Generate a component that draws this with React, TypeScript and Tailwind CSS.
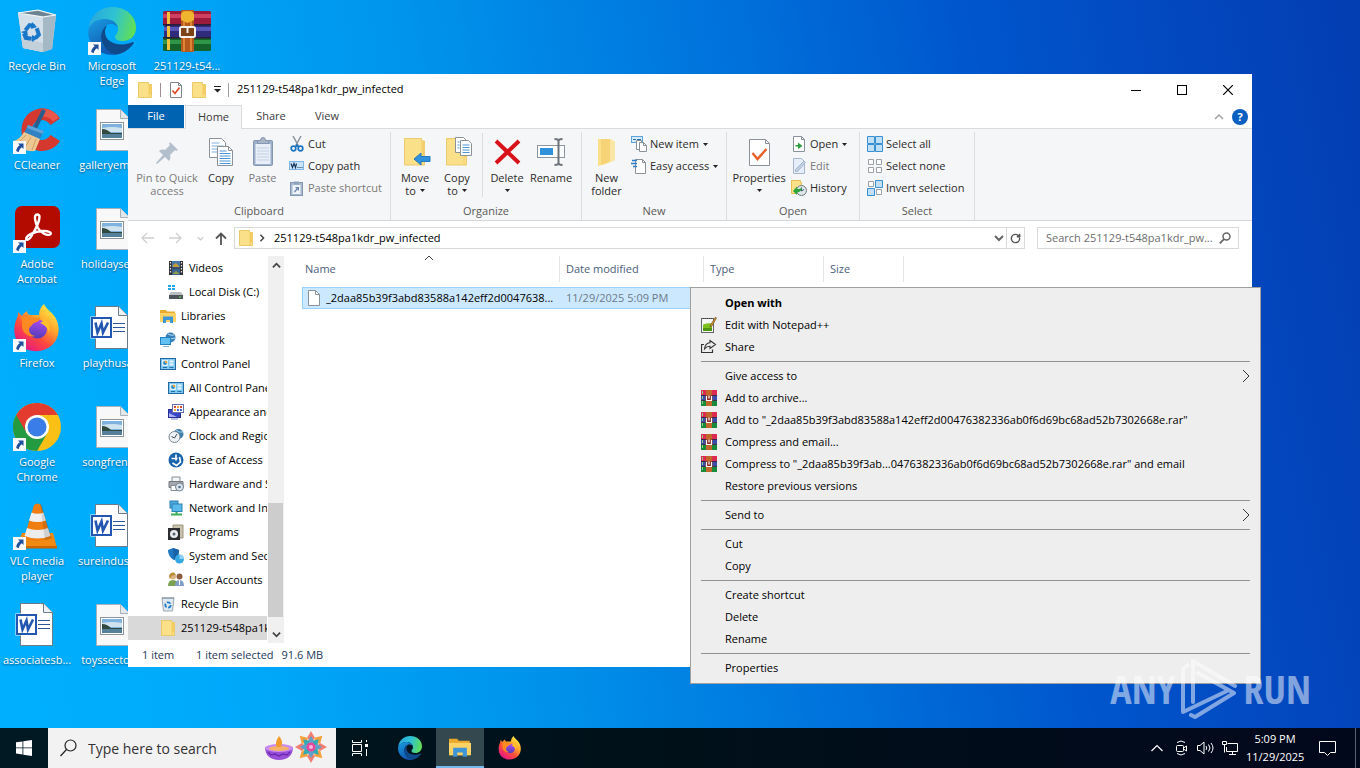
import type { ReactNode } from 'react';
import clsx from 'clsx';
import { RotateCw } from 'lucide-react';

const FOLDER_NAME = '251129-t548pa1kdr_pw_infected';

/* ---------- desktop icons ---------- */

const ShortcutArrow = () => (
    <svg
        className="absolute bottom-0 left-0"
        width="13"
        height="13"
        viewBox="0 0 13 13"
    >
        <rect width="13" height="13" fill="#f7f9fb" />
        <path
            d="M5 2.5h5.500V8L8.800 6.300C7 7.600 6 9 5.700 11.300L3.200 10C3.400 7.600 4.700 5.600 6.800 4.300z"
            fill="#1f4e9c"
        />
    </svg>
);

const RecycleBinIcon = ({ size = 48 }: { size?: number }) => (
    <svg width={size} height={size} viewBox="0 0 48 48">
        <path d="M5 6l20-3 18 5-4 34-9 3-20-4z" fill="#c9d8e2" />
        <path d="M30 10l13-2-4 34-9 3z" fill="#a5b8c6" />
        <path d="M5 6l25 4v35l-20-4z" fill="#d3e0e9" />
        <path d="M8 30l22 6v9l-20-4z" fill="#c3d0d9" />
        <path d="M5 6l20-3 18 5-13 2z" fill="#8fa4b1" />
        <path d="M8 6l17-2 14 4-9 1z" fill="#6b8391" />
        <path
            d="M5 6l20-3 18 5-13 2z"
            fill="none"
            stroke="#f3f8fa"
            strokeWidth="1.2"
        />
        <g
            fill="none"
            stroke="#1977c9"
            strokeWidth="4"
            transform="rotate(8 18 26)"
        >
            <path d="M12 24l3.500-5.500h5" />
            <path d="M23 20.500l3 6-3 4" />
            <path d="M19.500 31.500h-6l-2.500-4" />
        </g>
        <path d="M19 15l5 5-6 2zM25 31l-6 4v-7zM8 25l6-2 1 6z" fill="#1977c9" />
    </svg>
);

const EdgeIcon = ({ size = 48 }: { size?: number }) => (
    <svg width={size} height={size} viewBox="0 0 48 48">
        <defs>
            <linearGradient id="edgeTop" x1="0" y1="0.4" x2="1" y2="0.6">
                <stop offset="0" stopColor="#2aa8dc" />
                <stop offset="0.5" stopColor="#2fc3d2" />
                <stop offset="1" stopColor="#63e04f" />
            </linearGradient>
            <linearGradient id="edgeLeft" x1="0" y1="0" x2="0.5" y2="1">
                <stop offset="0" stopColor="#1b9de2" />
                <stop offset="1" stopColor="#0f57b0" />
            </linearGradient>
        </defs>
        <path
            d="M0.500 22C2 8 12 0 24.500 0 38 0 48 9 48 20.500 48 29 42 34 35 34c-6 0-8-2-8-4 0-2 3-3 3-8 0-6-6-10-13-10C9 12 3 16 .500 22z"
            fill="url(#edgeTop)"
        />
        <path
            d="M.500 22C3 15.500 9.500 12 16.500 12c7.500 0 13.500 4.300 13.500 10 0-2.500-3-5-7-5-6 0-10 5-10 12 0 9 7 17 16 18.500C14 50-2 39 .500 22z"
            fill="url(#edgeLeft)"
        />
        <path
            d="M17 19.500C13 24 12 30 14 35c3 8 9 12 15 12.500 7-1.200 13-5.500 16.500-11 .700-1.200-.500-1.800-1.500-1.200C34 40 17 37 17 25c0-2 .500-4 2-6.500z"
            fill="#114a8b"
        />
    </svg>
);

const WinrarIcon = ({ size = 48 }: { size?: number }) => (
    <svg width={size} height={size} viewBox="0 0 48 48">
        <rect x="0" y="4" width="48" height="14" rx="1.500" fill="#9c1a3b" />
        <rect x="0" y="7" width="48" height="4" fill="#cf3f60" />
        <rect x="1" y="18" width="47" height="13" rx="1.500" fill="#2f2c7c" />
        <rect x="1" y="20" width="47" height="4" fill="#5755b8" />
        <rect x="0" y="31" width="48" height="13" rx="1.500" fill="#14632a" />
        <rect x="0" y="33" width="48" height="4" fill="#2f9648" />
        <path d="M4 5h3v12H4zM4 19h3v11H4zM4 32h3v11H4z" fill="#f2c13b" />
        <path d="M0 17h48v1.500H0zM0 30h48v1.500H0z" fill="#2b1d33" />
        <rect x="18" y="3" width="13" height="42" rx="1" fill="#b55a1c" />
        <path d="M20 4h2v40h-2zM27 4h2v40h-2z" fill="#dd8636" />
        <path d="M18 8q0-4 6.500-4T31 8v5l-6.500 3L18 13z" fill="#f0b52e" />
        <rect
            x="17"
            y="20"
            width="15"
            height="10"
            rx="1.500"
            fill="#7b4316"
            stroke="#f1f1ee"
            strokeWidth="2"
        />
        <path d="M24.500 20v6" stroke="#f1f1ee" strokeWidth="2" />
    </svg>
);

const CCleanerIcon = () => (
    <svg width="48" height="48" viewBox="0 0 48 48">
        <path
            d="M47 12.500C42 5 34 1.500 27 2.500 16 4 8.500 13 8.500 24S17 45 29 45c7 0 14-3.500 18-10l-9.500-6C35.500 32.500 32 34 28.500 34 23 34 19 29.500 19 24s4-10 9.500-10c3.500 0 7 1.500 9 5z"
            fill="#d5382f"
        />
        <path d="M28 3.500c8-1 14 2.500 18 8l-6 4c-4-5-9-5-12-4.500z" fill="#e8584a" />
        <path d="M31 4l-9 18" stroke="#2a5d8c" strokeWidth="4" />
        <path d="M15 19l16 6-4 8-16-6z" fill="#3181c3" />
        <path d="M15 19l16 6-1 3-16-6z" fill="#5ea4da" />
        <path d="M11 26l16 7-5 12c-8 1-17-3-22-10 5-1 8-4 11-9z" fill="#edc892" />
        <path
            d="M13 29L5 37M18 31l-6 11M23 33l-4 11"
            stroke="#cf9f60"
            strokeWidth="1"
        />
    </svg>
);

const AcrobatIcon = () => (
    <svg width="48" height="48" viewBox="0 0 48 48">
        <rect x="2" y="1" width="45" height="42" rx="7" fill="#b30b00" />
        <path
            d="M24 9.500c-3.500 0-2 8 1 13.500 3 5 9 8 12 6.500 2.500-1.500-1-4-8-3.500-7 .500-14 3.500-15.500 6.500-1.500 3 2 3.500 5-1.500 4-6.500 8-15 8-19 0-1.500-1-2.500-2.500-2.500z"
            fill="none"
            stroke="#fff"
            strokeWidth="2.400"
        />
    </svg>
);

const FirefoxIcon = ({ size = 48 }: { size?: number }) => (
    <svg width={size} height={size} viewBox="0 0 48 48">
        <defs>
            <linearGradient id="foxBody" x1="0.850" y1="0.050" x2="0.200" y2="0.950">
                <stop offset="0" stopColor="#fff14a" />
                <stop offset="0.350" stopColor="#ffa52b" />
                <stop offset="0.650" stopColor="#ff4a3d" />
                <stop offset="1" stopColor="#e31587" />
            </linearGradient>
            <linearGradient id="foxGlobe" x1="0.500" y1="0" x2="0.300" y2="1">
                <stop offset="0" stopColor="#a94bf0" />
                <stop offset="1" stopColor="#4f3bb5" />
            </linearGradient>
        </defs>
        <path
            d="M31 0c2 5 8 8 11 13 5 8 5 19-1 26-8 10-25 11-34 2C0 34 0 22 4 14c1-2 1-4 1-6l4 4c1-2 3-4 5-5 0 3 2 4 4 4h8c0-5 2-8 5-11z"
            fill="url(#foxBody)"
        />
        <circle cx="24.500" cy="25" r="9.500" fill="url(#foxGlobe)" />
        <path
            d="M8 13c5-2 9-1 12 1h7c0 3-3 4-6 5-2 1-2 3-4 4-3 4 1 9 6 9-8 2-15-4-14-12 0-3 0-5-1-7z"
            fill="#ff8a22"
        />
        <path d="M30 14c5 2 8 9 6 15-1-5-4-8-9-10 3-1 4-3 3-5z" fill="#ffbf2c" />
    </svg>
);

const ChromeIcon = () => (
    <svg width="48" height="48" viewBox="0 0 48 48">
        <circle cx="24" cy="24" r="24" fill="#fbc016" />
        <path d="M3.200 12A24 24 0 0 1 44.800 12H24L12 30z" fill="#e33b2e" />
        <path d="M3.200 12A24 24 0 0 0 24 48l10.400-18L24 36 13.600 30z" fill="#249a41" />
        <circle cx="24" cy="24" r="12" fill="#fff" />
        <circle cx="24" cy="24" r="9.500" fill="#3a7de9" />
    </svg>
);

const VlcIcon = () => (
    <svg width="48" height="48" viewBox="0 0 48 48">
        <path d="M9 31h31l4 15H3z" fill="#f08a12" />
        <path d="M3 44h41v2.500H3z" fill="#cd6500" />
        <path d="M21 3q3.500-3 7 0l10 33q-13.500 6-27 0z" fill="#ef7d10" />
        <path d="M18.500 10.500q6 2.500 12 0l2.500 8q-8.500 3-17 0z" fill="#f0f0f0" />
        <path d="M14 26q10.500 4 21 0l2.500 8q-13 5-26 0z" fill="#ececec" />
        <path d="M27 1.500l2 1 10 34-7 2z" fill="#000" opacity="0.120" />
    </svg>
);

const WordDocIcon = () => (
    <svg width="48" height="48" viewBox="0 0 48 48">
        <path d="M7.500 2.500h23l9 9v33h-32z" fill="#fff" stroke="#6d7b88" />
        <path d="M30.500 2.500v9h9" fill="#eef1f4" stroke="#6d7b88" />
        <path
            d="M25 19.500h12M25 23.500h12M25 27.500h12"
            stroke="#2b579a"
            strokeWidth="1.200"
        />
        <rect x="2.500" y="12.500" width="21" height="22" fill="#fff" />
        <rect
            x="4"
            y="14"
            width="19"
            height="19"
            fill="#fff"
            stroke="#2256b0"
            strokeWidth="2"
        />
        <path
            d="M7.500 18.500l2 10 4-9 1.500 9 5-10"
            fill="none"
            stroke="#2256b0"
            strokeWidth="2.600"
        />
    </svg>
);

const ImageDocIcon = () => (
    <svg width="48" height="48" viewBox="0 0 48 48">
        <path d="M8.500 3.500h24l9 9v32h-33z" fill="#f8f8f8" stroke="#a9b1b8" />
        <path d="M32.500 3.500v9h9" fill="#e3e7ea" stroke="#a9b1b8" />
        <rect x="12.500" y="16.500" width="23" height="17" fill="#fff" stroke="#8b949c" />
        <rect x="14" y="18" width="20" height="14" fill="#7fb2df" />
        <path d="M14 22q10-2 20 0v4H14z" fill="#cfe3ef" />
        <path d="M14 23q5 0 9 4h11v2H14z" fill="#31493f" />
        <path d="M14 28h20v4H14z" fill="#54809b" />
    </svg>
);

type DesktopItem = { label: string; icon: ReactNode; shortcut?: boolean };

const desktopItems: DesktopItem[] = [
    { label: 'Recycle Bin', icon: <RecycleBinIcon /> },
    { label: 'CCleaner', icon: <CCleanerIcon />, shortcut: true },
    { label: 'Adobe Acrobat', icon: <AcrobatIcon />, shortcut: true },
    { label: 'Firefox', icon: <FirefoxIcon />, shortcut: true },
    { label: 'Google Chrome', icon: <ChromeIcon />, shortcut: true },
    { label: 'VLC media player', icon: <VlcIcon />, shortcut: true },
    { label: 'associatesb...', icon: <WordDocIcon /> },
    { label: 'Microsoft Edge', icon: <EdgeIcon />, shortcut: true },
    { label: 'galleryemp...', icon: <ImageDocIcon /> },
    { label: 'holidayser...', icon: <ImageDocIcon /> },
    { label: 'playthusa...', icon: <WordDocIcon /> },
    { label: 'songfrenc...', icon: <ImageDocIcon /> },
    { label: 'sureindustr...', icon: <WordDocIcon /> },
    { label: 'toyssector...', icon: <ImageDocIcon /> },
    { label: '251129-t54...', icon: <WinrarIcon /> },
];

/* ---------- shared small icons ---------- */

const Svg16 = ({ children }: { children: ReactNode }) => (
    <svg className="shrink-0" width="16" height="16" viewBox="0 0 16 16" fill="none">
        {children}
    </svg>
);

const Svg32 = ({ children }: { children: ReactNode }) => (
    <svg className="shrink-0" width="32" height="32" viewBox="0 0 32 32" fill="none">
        {children}
    </svg>
);

const FolderIcon = () => (
    <Svg16>
        <path d="M1.500 .500h10v2h3v13h-13z" fill="#fbe08a" stroke="#ecc968" />
        <path d="M11.500 2.500h3v9l-2 1.500v2.500h-1z" fill="#f3cd62" />
    </Svg16>
);

const CheckPageIcon = () => (
    <Svg16>
        <path d="M2.500 .500h8l3 3v12h-11z" fill="#fff" stroke="#7e8388" />
        <path d="M10.500 .500v3h3" stroke="#7e8388" />
        <path d="M4.500 8.500l2.500 3 4.500-6" stroke="#dd4a25" strokeWidth="1.700" />
    </Svg16>
);

const Caret = () => (
    <svg className="inline-block shrink-0" width="5" height="3" viewBox="0 0 5 3">
        <path d="M0 0h5L2.500 3z" fill="#222" />
    </svg>
);

const Chevron = ({
    dir,
    size = 10,
    color = '#444',
    width = 1.5,
}: {
    dir: 'up' | 'down' | 'right';
    size?: number;
    color?: string;
    width?: number;
}) => (
    <svg className="shrink-0" width={size} height={size} viewBox="0 0 10 10">
        <path
            d={
                dir === 'up'
                    ? 'M1 7l4-4 4 4'
                    : dir === 'down'
                      ? 'M1 3l4 4 4-4'
                      : 'M3 1l4 4-4 4'
            }
            fill="none"
            stroke={color}
            strokeWidth={width}
        />
    </svg>
);

/* ---------- ribbon ---------- */

const PinIcon = () => (
    <Svg32>
        <path
            d="M19 6l8 8-2 1-1-1-5 5c1 3 0 5-1 6l-4-4-8 7-1-1 7-8-4-4c1-1 3-2 6-1l5-5-1-1z"
            fill="#b4bfce"
        />
    </Svg32>
);

const CopyIcon = () => (
    <Svg32>
        <path d="M4.500 2.500h12l4 4v15h-16z" fill="#fff" stroke="#8b9199" />
        <path d="M6.500 7h8M6.500 10h12M6.500 13h12M6.500 16h12" stroke="#7fb0df" />
        <path d="M12.500 10.500h11l4 4v15h-15z" fill="#fff" stroke="#8b9199" />
        <path d="M23.500 10.500v4h4" stroke="#8b9199" />
        <path
            d="M14.500 15h7M14.500 17.500h11M14.500 20h11M14.500 22.500h11M14.500 25h11M14.500 27.500h11"
            stroke="#4c94d8"
        />
    </Svg32>
);

const PasteIcon = () => (
    <Svg32>
        <rect x="6.500" y="4.500" width="19" height="25" rx="1" fill="#9db0c9" stroke="#8497b2" />
        <rect x="8.500" y="8" width="15" height="20" fill="#e8eff8" />
        <path d="M10 12h12M10 15h12M10 18h12M10 21h12M10 24h12" stroke="#c2d0e2" />
        <path d="M10.500 7.500v-3h3q0-3 2.500-3t2.500 3h3v3z" fill="#a9b5c6" stroke="#8497b2" />
    </Svg32>
);

const ScissorsIcon = () => (
    <Svg16>
        <path d="M4 0l6 11M12 0L6 11" stroke="#8d959e" strokeWidth="1.500" />
        <circle cx="4.500" cy="12.500" r="2.300" stroke="#1c76c4" strokeWidth="1.700" />
        <circle cx="11.500" cy="12.500" r="2.300" stroke="#1c76c4" strokeWidth="1.700" />
        <path d="M8 7.500l2 3.500H6z" fill="#1c76c4" />
    </Svg16>
);

const CopyPathIcon = () => (
    <Svg16>
        <rect x="0.500" y="3.500" width="14" height="8" fill="#c9e3f9" stroke="#7eb6e8" />
        <path d="M2 5.500l1.500 4 1.500-4 1.500 4 1-4" stroke="#17365c" strokeWidth="1.200" />
        <path d="M8.500 9.500h1M10.500 9.500h1M12.500 9.500h1" stroke="#17365c" />
    </Svg16>
);

const PasteShortcutIcon = () => (
    <Svg16>
        <rect x="1.500" y="2.500" width="12" height="13" fill="#a8b9cf" stroke="#8296b3" />
        <rect x="3.500" y="5" width="8" height="9" fill="#eef3fa" />
        <path d="M5 1.500h5v3H5z" fill="#8fa2bd" />
        <path d="M6 7h4v4l-1.500-1.500L6 12.500 5 11.500l2.500-3z" fill="#6e87ac" />
    </Svg16>
);

const BigFolder = ({ children }: { children?: ReactNode }) => (
    <Svg32>
        <path d="M5.500 2.500h17v2.500h3v24h-20z" fill="#fbe08a" stroke="#eccb70" />
        <path d="M22.500 5h3v15l-2 2v7h-1z" fill="#f3cf6c" />
        {children}
    </Svg32>
);

const MoveToIcon = () => (
    <BigFolder>
        <path d="M15 23l7-6v3.500h9v5h-9V29z" fill="#2f92db" stroke="#2279bd" />
    </BigFolder>
);

const CopyToIcon = () => (
    <BigFolder>
        <path d="M14.500 1.500h8l3 3v12h-11z" fill="#fff" stroke="#8b9199" />
        <path d="M19.500 4.500h8l3 3v12h-11z" fill="#fff" stroke="#8b9199" />
        <path
            d="M16.500 6h2M16.500 9h2M16.500 12h2M21.500 9h7M21.500 11.500h7M21.500 14h7M21.500 16.500h7"
            stroke="#4c94d8"
        />
    </BigFolder>
);

const DeleteIcon = () => (
    <Svg32>
        <path d="M5 5l23 22M28 5L5 27" stroke="#d9121a" strokeWidth="4" />
    </Svg32>
);

const RenameIcon = () => (
    <Svg32>
        <rect x="2.500" y="9.500" width="27" height="12" fill="#fff" stroke="#8d959e" />
        <rect x="5" y="12" width="13" height="7" fill="#2f92db" />
        <path
            d="M19.500 3q4 0 4 2 0-2 4-2M23.500 4v24M19.500 29q4 0 4-2 0 2 4 2"
            stroke="#6b7279"
            strokeWidth="2"
        />
    </Svg32>
);

const NewFolderIcon = () => (
    <Svg32>
        <path d="M7 3h12l5 3v18l-9 4-8 2z" fill="#fbe08a" />
        <path d="M10 3h9v22l-9 4z" fill="#f7d377" />
        <path d="M19 3l5 3v18l-5 1z" fill="#fae6a4" />
    </Svg32>
);

const BigCheckPage = () => (
    <Svg32>
        <path d="M6.500 3.500h16l4 4v22h-20z" fill="#fff" stroke="#8b9199" />
        <path d="M22.500 3.500v4h4" stroke="#8b9199" />
        <path d="M9.500 17l5 6 9-10" stroke="#e9622a" strokeWidth="2.500" />
    </Svg32>
);

const NewItemIcon = () => (
    <Svg16>
        <rect x="0.500" y="0.500" width="11" height="6" fill="#d6ebfb" stroke="#5ba3dd" />
        <path d="M2 3.500h3M6 3.500h4" stroke="#2b6cad" />
        <path d="M5.500 4.500h5v9h-5z" fill="#fff" stroke="#8b9199" />
        <path d="M8.500 6.500h4l3 3v6h-7z" fill="#fff" stroke="#8b9199" />
        <path d="M12.500 6.500v3h3" stroke="#8b9199" />
    </Svg16>
);

const EasyAccessIcon = () => (
    <Svg16>
        <path d="M4.500 1.500h7l3 3v11h-10z" fill="#fff" stroke="#8b9199" />
        <path d="M11.500 1.500v3h3" stroke="#8b9199" />
        <path d="M1 2.500h5M0 5.500h6M2 8.500h4" stroke="#2f7fc4" strokeWidth="1.500" />
    </Svg16>
);

const OpenIcon = () => (
    <Svg16>
        <path d="M2.500 .500h8l3 3v12h-11z" fill="#fff" stroke="#8b9199" />
        <path d="M10.500 .500v3h3" stroke="#8b9199" />
        <path d="M4.500 9H7V6.500L11.500 10 7 13v-2.500H4.500z" fill="#2d9c3c" />
    </Svg16>
);

const EditIcon = () => (
    <Svg16>
        <path d="M2.500 .500h8l3 3v12h-11z" fill="#e6eff9" stroke="#a5b6cc" />
        <path d="M13 3l1.500 1.500-8 9H4.500v-2z" fill="#c2d0e4" stroke="#a5b6cc" />
    </Svg16>
);

const HistoryIcon = () => (
    <Svg16>
        <path d="M.500 .500h9v2h1v11h-10z" fill="#fbe08a" stroke="#e3c04f" />
        <circle cx="10.500" cy="10.500" r="5" fill="#dfe6ea" stroke="#6d7982" />
        <path d="M10.500 7.500v3.500l2.500-1.500" stroke="#3a5a80" />
        <path d="M2 11l4-4.500V9c2 0 4-.500 5-1.500-.200 3-2 4.700-5 5V15z" fill="#2da33b" />
    </Svg16>
);

const SelectAllIcon = () => (
    <Svg16>
        <path
            d="M.500 .500h7v7h-7zM8.500 .500h7v7h-7zM.500 8.500h7v7h-7zM8.500 8.500h7v7h-7z"
            fill="#bfe0f8"
            stroke="#3a8fd0"
        />
    </Svg16>
);

const SelectNoneIcon = () => (
    <Svg16>
        <path
            d="M1.500 1.500h5v5h-5zM9.500 1.500h5v5h-5zM1.500 9.500h5v5h-5zM9.500 9.500h5v5h-5z"
            fill="#fff"
            stroke="#9ba1a7"
        />
    </Svg16>
);

const InvertIcon = () => (
    <Svg16>
        <path d="M1.500 1.500h5v5h-5zM9.500 9.500h5v5h-5z" fill="#fff" stroke="#9ba1a7" />
        <path d="M8.500 .500h7v7h-7zM.500 8.500h7v7h-7z" fill="#bfe0f8" stroke="#3a8fd0" />
    </Svg16>
);

const BigButton = ({
    icon,
    lines,
    caret,
    muted,
    width,
}: {
    icon: ReactNode;
    lines: string[];
    caret?: 'inline' | 'below';
    muted?: boolean;
    width: string;
}) => (
    <button
        className={clsx(
            'flex flex-col items-center gap-[3px] self-start pt-[3px] leading-[13px] whitespace-nowrap',
            width,
            muted && 'text-[#7a7a7a]'
        )}
    >
        {icon}
        <span>
            {lines.map((line, index) => (
                <span key={line} className="flex items-center justify-center gap-1">
                    {line}
                    {caret === 'inline' && index === lines.length - 1 && <Caret />}
                </span>
            ))}
            {caret === 'below' && (
                <span className="flex h-[13px] items-center justify-center">
                    <Caret />
                </span>
            )}
        </span>
    </button>
);

const SmallButton = ({
    icon,
    label,
    caret,
    muted,
}: {
    icon: ReactNode;
    label: string;
    caret?: boolean;
    muted?: boolean;
}) => (
    <button
        className={clsx(
            'flex h-[22px] items-center gap-[3px] whitespace-nowrap',
            muted && 'text-[#7a7a7a]'
        )}
    >
        {icon}
        <span className="pr-px">{label}</span>
        {caret && <Caret />}
    </button>
);

const RibbonGroup = ({
    title,
    width,
    children,
}: {
    title: string;
    width: string;
    children: ReactNode;
}) => (
    <section
        className={clsx('mt-[3px] shrink-0 border-r border-[#dcdee0] pt-px', width)}
    >
        <div className="flex h-[70px]">{children}</div>
        <h2 className="text-center leading-4 text-[#5a5a5a]">{title}</h2>
    </section>
);

const Ribbon = () => (
    <div className="flex h-[92px] shrink-0 border-b border-[#d5d7d9] bg-[#f5f6f7] text-[#2b2b2b]">
        <RibbonGroup title="Clipboard" width="w-[263px]">
            <BigButton
                icon={<PinIcon />}
                lines={['Pin to Quick', 'access']}
                width="w-[78px]"
                muted
            />
            <BigButton icon={<CopyIcon />} lines={['Copy']} width="w-[30px]" />
            <BigButton icon={<PasteIcon />} lines={['Paste']} width="w-[53px]" muted />
            <div>
                <SmallButton icon={<ScissorsIcon />} label="Cut" />
                <SmallButton icon={<CopyPathIcon />} label="Copy path" />
                <SmallButton icon={<PasteShortcutIcon />} label="Paste shortcut" muted />
            </div>
        </RibbonGroup>
        <RibbonGroup title="Organize" width="w-[191px]">
            <div className="flex pl-[3px]">
                <BigButton
                    icon={<MoveToIcon />}
                    lines={['Move', 'to']}
                    caret="inline"
                    width="w-[42px]"
                />
                <BigButton
                    icon={<CopyToIcon />}
                    lines={['Copy', 'to']}
                    caret="inline"
                    width="w-[42px]"
                />
                <div className="mx-1 h-16 w-px bg-[#dcdee0]" />
                <BigButton
                    icon={<DeleteIcon />}
                    lines={['Delete']}
                    caret="below"
                    width="w-[40px]"
                />
                <BigButton icon={<RenameIcon />} lines={['Rename']} width="w-[48px]" />
            </div>
        </RibbonGroup>
        <RibbonGroup title="New" width="w-[145px]">
            <BigButton
                icon={<NewFolderIcon />}
                lines={['New', 'folder']}
                width="w-[49px]"
            />
            <div>
                <SmallButton icon={<NewItemIcon />} label="New item" caret />
                <SmallButton icon={<EasyAccessIcon />} label="Easy access" caret />
            </div>
        </RibbonGroup>
        <RibbonGroup title="Open" width="w-[133px]">
            <BigButton
                icon={<BigCheckPage />}
                lines={['Properties']}
                caret="below"
                width="w-[64px]"
            />
            <div>
                <SmallButton icon={<OpenIcon />} label="Open" caret />
                <SmallButton icon={<EditIcon />} label="Edit" muted />
                <SmallButton icon={<HistoryIcon />} label="History" />
            </div>
        </RibbonGroup>
        <RibbonGroup title="Select" width="w-[115px]">
            <div className="pl-[7px]">
                <SmallButton icon={<SelectAllIcon />} label="Select all" />
                <SmallButton icon={<SelectNoneIcon />} label="Select none" />
                <SmallButton icon={<InvertIcon />} label="Invert selection" />
            </div>
        </RibbonGroup>
    </div>
);

/* ---------- navigation tree ---------- */

const VideosIcon = () => (
    <Svg16>
        <rect x="1" y="1" width="14" height="14" fill="#2f3136" />
        <rect x="4" y="1" width="8" height="6.500" fill="#4779a8" />
        <rect x="4" y="8.500" width="8" height="6.500" fill="#3a628c" />
        <path d="M5 5l3-2 3 3v1H5z" fill="#c59a3c" />
        <path d="M5 13l3-2 3 2v1H5z" fill="#8b9c4b" />
        <path
            d="M2.500 2v12M13.500 2v12"
            stroke="#e8e8e8"
            strokeWidth="1.200"
            strokeDasharray="1.500 1.500"
        />
    </Svg16>
);

const DiskIcon = () => (
    <Svg16>
        <path d="M0 1h3v2H0zM4 1h3v2H4zM0 4h3v2H0zM4 4h3v2H4z" fill="#22a7e6" />
        <path d="M3 8h10l2 3H1z" fill="#b9bec3" />
        <rect x="1" y="11" width="14" height="4" fill="#4c5359" />
        <rect x="11" y="12.500" width="2" height="1" fill="#6fe06a" />
    </Svg16>
);

const LibrariesIcon = ({ size = 16 }: { size?: number }) => (
    <svg className="shrink-0" width={size} height={size} viewBox="0 0 16 16">
        <path d="M0 2h6l1 1.500h8V14H0z" fill="#e9a92c" />
        <path d="M0 5h16v9H0z" fill="#fbd266" />
        <path d="M3 8.500h10V15h-3v-3H6v3H3z" fill="#3e95d6" />
    </svg>
);

const NetworkIcon = () => (
    <Svg16>
        <circle cx="10.500" cy="5.500" r="5" fill="#3a7fb5" />
        <path d="M8 2q3 2 6 1M6 6q4 2 9 0" stroke="#b4dcf2" />
        <rect x="0.500" y="5.500" width="10" height="7" fill="#5fc0f2" stroke="#2583bd" />
        <path d="M3 14.500h6" stroke="#7fb8d8" />
    </Svg16>
);

const ControlPanelIcon = () => (
    <Svg16>
        <rect x="0.500" y="2.500" width="15" height="11" fill="#7cc8f2" stroke="#23699e" />
        <rect x="2" y="4" width="6" height="6" fill="#d9f0fb" />
        <circle cx="5" cy="7" r="2" fill="#3d8fc6" />
        <path d="M5 7V4.500A2.500 2.500 0 0 1 7.500 7z" fill="#e7a13a" />
        <path d="M9.500 5.500h4M9.500 8.500h4" stroke="#e9f6fd" strokeWidth="2" />
        <path d="M3 11.500h4M9.500 11.500h4" stroke="#1f6dab" />
    </Svg16>
);

const AppearanceIcon = () => (
    <Svg16>
        <rect x="0.500" y="5.500" width="12" height="8" fill="#3945c4" stroke="#252f93" />
        <path d="M1 9l8 4H1z" fill="#a9aef5" />
        <rect x="4.500" y="0.500" width="11" height="8" fill="#fff" stroke="#6a6fae" />
        <path d="M6 2h2v2H6zM12 2h2v2h-2z" fill="#df4a3a" />
        <path d="M9 2h2v2H9zM6 5h2v2H6z" fill="#eaaa35" />
        <path d="M9 5h2v2H9zM12 5h2v2h-2z" fill="#4267c9" />
        <path d="M3 15h7" stroke="#7a82c9" />
    </Svg16>
);

const ClockIcon = () => (
    <Svg16>
        <circle cx="10.500" cy="6" r="5" fill="#3f7ea9" />
        <path d="M8 2q3 3 7 2" stroke="#9fd0e6" />
        <circle cx="6.500" cy="9" r="5.500" fill="#eef2f4" stroke="#7b8790" />
        <path d="M3.500 8.500l3 1.500L9 6" stroke="#3c4d5a" />
    </Svg16>
);

const EaseIcon = () => (
    <Svg16>
        <circle cx="8" cy="8" r="7.500" fill="#1964ad" />
        <path d="M8 2.500v6M3.500 6.500h6M11.500 5l1 5-4 3.500-4-2.500" stroke="#fff" strokeWidth="1.600" />
    </Svg16>
);

const PrinterIcon = () => (
    <Svg16>
        <path d="M4 1h8v5H4z" fill="#f3f4f5" stroke="#868c91" />
        <path d="M1 5.500h14v6H1z" fill="#a3a9ae" stroke="#72787d" />
        <path d="M3 9.500h6v5H3z" fill="#fff" stroke="#868c91" />
        <circle cx="11.500" cy="11" r="4" fill="#dfe4e8" stroke="#6d8294" />
        <circle cx="11.500" cy="11" r="1.300" fill="#4e7592" />
    </Svg16>
);

const InternetIcon = () => (
    <Svg16>
        <rect x="2" y="1" width="8" height="7" fill="#4da9de" stroke="#2b82b5" />
        <rect x="4" y="4" width="10" height="7.500" fill="#59b9ea" stroke="#2b82b5" />
        <path d="M3 14.500h11M8.500 12v3" stroke="#3fae5a" strokeWidth="2" />
    </Svg16>
);

const ProgramsIcon = () => (
    <Svg16>
        <path d="M5 1h10v13H5z" fill="#c9c2ad" stroke="#9d957d" />
        <rect x="0" y="4" width="12" height="12" fill="#2b2d31" />
        <circle cx="6" cy="10" r="4" fill="#e9ebee" />
        <circle cx="6" cy="10" r="1.500" fill="#55606c" />
    </Svg16>
);

const ShieldIcon = () => (
    <Svg16>
        <path d="M0 2l5-2 6 2c0 5-2 8-5 10C2 10 0 6 0 2z" fill="#1f78c1" />
        <path d="M5 0l6 2c0 5-2 8-5 10z" fill="#1763a6" />
        <circle cx="11.500" cy="11" r="4.500" fill="#35a7e5" />
        <path d="M11.500 11V6.500A4.500 4.500 0 0 1 16 11z" fill="#8fd0f3" />
    </Svg16>
);

const UsersIcon = () => (
    <Svg16>
        <circle cx="5" cy="4.500" r="3" fill="#d9b483" />
        <path d="M1 4q1-4 5-3.500L8 3 4 3.500 2 7z" fill="#b98a35" />
        <path d="M0 14q0-6 5-6t5 6z" fill="#7ca053" />
        <circle cx="11.500" cy="4.500" r="3" fill="#8a5d40" />
        <path d="M7 14q0-6 4.500-6t4.500 6z" fill="#7f9fc9" />
        <path d="M11.500 8v5" stroke="#fff" />
    </Svg16>
);

const SmallBinIcon = () => (
    <Svg16>
        <path d="M2 2h12l-1.500 13h-9z" fill="#dfe8ee" stroke="#9aa9b4" />
        <path d="M2 2h12" stroke="#7d8e9a" />
        <circle cx="8" cy="9" r="2.700" stroke="#1977c9" strokeWidth="1.700" strokeDasharray="4 1.600" />
    </Svg16>
);

type NavItem = { label: string; icon: ReactNode; deep?: boolean; selected?: boolean };

const navItems: NavItem[] = [
    { label: 'Videos', icon: <VideosIcon />, deep: true },
    { label: 'Local Disk (C:)', icon: <DiskIcon />, deep: true },
    { label: 'Libraries', icon: <LibrariesIcon /> },
    { label: 'Network', icon: <NetworkIcon /> },
    { label: 'Control Panel', icon: <ControlPanelIcon /> },
    { label: 'All Control Panel Items', icon: <ControlPanelIcon />, deep: true },
    { label: 'Appearance and Personalization', icon: <AppearanceIcon />, deep: true },
    { label: 'Clock and Region', icon: <ClockIcon />, deep: true },
    { label: 'Ease of Access', icon: <EaseIcon />, deep: true },
    { label: 'Hardware and Sound', icon: <PrinterIcon />, deep: true },
    { label: 'Network and Internet', icon: <InternetIcon />, deep: true },
    { label: 'Programs', icon: <ProgramsIcon />, deep: true },
    { label: 'System and Security', icon: <ShieldIcon />, deep: true },
    { label: 'User Accounts', icon: <UsersIcon />, deep: true },
    { label: 'Recycle Bin', icon: <SmallBinIcon /> },
    { label: FOLDER_NAME, icon: <FolderIcon />, selected: true },
];

const NavPane = () => (
    <nav className="flex w-[156px] shrink-0">
        <ul className="w-[139px]">
            {navItems.map((item) => (
                <li key={item.label}>
                    <a
                        href="#"
                        className={clsx(
                            'flex h-6 items-center gap-[5px] overflow-hidden whitespace-nowrap',
                            item.deep ? 'pl-10' : 'pl-8',
                            item.selected && 'bg-[#d9d9d9]'
                        )}
                    >
                        {item.icon}
                        {item.label}
                    </a>
                </li>
            ))}
        </ul>
        <div className="ml-px flex w-4 flex-col bg-[#f0f0f0]">
            <button className="flex h-[18px] items-center justify-center" aria-label="Scroll up">
                <Chevron dir="up" size={9} width={2} />
            </button>
            <div className="flex-1" />
            <div className="h-[114px] w-[15px] bg-[#cdcdcd]" />
            <button className="flex h-[26px] items-center justify-center pt-2" aria-label="Scroll down">
                <Chevron dir="down" size={9} width={2} />
            </button>
        </div>
    </nav>
);

/* ---------- file list ---------- */

const PageIcon = () => (
    <svg className="shrink-0" width="16" height="16" viewBox="0 0 16 16" fill="none">
        <path d="M2.500 .500h7l4 4v11h-11z" fill="#fff" stroke="#8b9199" />
        <path d="M9.500 .500v4h4" stroke="#8b9199" />
    </svg>
);

const headings = ['Name', 'Date modified', 'Type', 'Size'];

const FileList = () => (
    <main className="min-w-0 flex-1 pl-[18px]">
        <table className="w-[602px] table-fixed border-separate border-spacing-0">
            <colgroup>
                <col className="w-[258px]" />
                <col className="w-[144px]" />
                <col className="w-[120px]" />
                <col className="w-[80px]" />
            </colgroup>
            <thead>
                <tr>
                    {headings.map((heading) => (
                        <th
                            key={heading}
                            className="relative h-[31px] p-0 text-left align-top font-normal text-[#4c607a]"
                        >
                            <div
                                className={clsx(
                                    'h-[26px] border-r border-[#e5e5e5] pt-1 leading-[18px]',
                                    heading === 'Name' ? 'pl-[3px]' : 'pl-[6px]'
                                )}
                            >
                                {heading}
                            </div>
                            {heading === 'Name' && (
                                <span className="absolute inset-x-0 -top-[3px] flex justify-center pr-1">
                                    <Chevron dir="up" width={1} />
                                </span>
                            )}
                        </th>
                    ))}
                </tr>
            </thead>
            <tbody>
                <tr className="bg-[#cce8ff]">
                    <td className="h-[22px] border-y border-l border-[#99d1ff] p-0">
                        <div className="flex items-center gap-1 pl-[3px]">
                            <PageIcon />
                            <span className="truncate">
                                _2daa85b39f3abd83588a142eff2d0047638...
                            </span>
                        </div>
                    </td>
                    <td className="border-y border-[#99d1ff] p-0 pl-[6px] text-[#6d7a88]">
                        11/29/2025 5:09 PM
                    </td>
                    <td className="border-y border-[#99d1ff] p-0" />
                    <td className="border-y border-r border-[#99d1ff] p-0" />
                </tr>
            </tbody>
        </table>
    </main>
);

/* ---------- explorer window ---------- */

const TitleBar = () => (
    <header className="flex h-[31px] shrink-0 items-center">
        <div className="flex items-center gap-[7px] pl-[9px]">
            <FolderIcon />
            <span className="h-[14px] w-px bg-[#a08f8f]" />
            <button aria-label="Properties">
                <CheckPageIcon />
            </button>
            <button aria-label="New folder">
                <FolderIcon />
            </button>
            <button aria-label="Customize Quick Access Toolbar">
                <svg width="7" height="7" viewBox="0 0 7 7">
                    <path d="M0 0h7v1H0zM0 3h7L3.500 6.500z" fill="#222" />
                </svg>
            </button>
            <span className="h-[14px] w-px bg-[#a0a0a0]" />
        </div>
        <h1 className="flex-1 pl-2">{FOLDER_NAME}</h1>
        <div className="flex h-full pr-px">
            <button className="flex w-[46px] items-center justify-center" aria-label="Minimize">
                <svg width="10" height="10" viewBox="0 0 10 10">
                    <path d="M0 5.500h10" stroke="#000" />
                </svg>
            </button>
            <button className="flex w-[46px] items-center justify-center" aria-label="Maximize">
                <svg width="10" height="10" viewBox="0 0 10 10">
                    <rect x="0.500" y="0.500" width="9" height="9" fill="none" stroke="#000" />
                </svg>
            </button>
            <button className="flex w-[46px] items-center justify-center" aria-label="Close">
                <svg width="10" height="10" viewBox="0 0 10 10">
                    <path d="M0 0l10 10M10 0L0 10" stroke="#000" strokeWidth="1.200" />
                </svg>
            </button>
        </div>
    </header>
);

const Tabs = () => (
    <div className="flex h-6 shrink-0 items-stretch border-b border-[#dadbdc] text-[#3b3b3b]">
        <button className="w-14 bg-[#0063b1] text-white">File</button>
        <button className="-mb-px ml-px w-[57px] border-x border-t border-[#dadbdc] bg-[#f5f6f7]">
            Home
        </button>
        <button className="w-[58px]">Share</button>
        <button className="w-[54px]">View</button>
        <div className="ml-auto flex items-center gap-2 pr-1">
            <button aria-label="Minimize the Ribbon">
                <Chevron dir="up" color="#a0a0a0" />
            </button>
            <button
                className="h-4 w-4 rounded-full bg-[#0a5fc0] text-center text-[11px] leading-4 font-bold text-white"
                aria-label="Help"
            >
                ?
            </button>
        </div>
    </div>
);

const AddressBar = () => (
    <div className="flex h-[34px] shrink-0 items-center pr-[13px]">
        <div className="flex w-[106px] items-center justify-between pr-[7px] pl-[13px]">
            <button aria-label="Back">
                <svg width="13" height="12" viewBox="0 0 13 12" fill="none">
                    <path d="M1 6h12M6 1L1 6l5 5" stroke="#cfcfcf" strokeWidth="1.300" />
                </svg>
            </button>
            <button className="ml-2" aria-label="Forward">
                <svg width="13" height="12" viewBox="0 0 13 12" fill="none">
                    <path d="M12 6H0M7 1l5 5-5 5" stroke="#cfcfcf" strokeWidth="1.300" />
                </svg>
            </button>
            <button className="ml-2" aria-label="Recent locations">
                <Chevron dir="down" size={7} color="#c5c5c5" />
            </button>
            <button className="ml-1" aria-label="Up">
                <svg width="12" height="13" viewBox="0 0 12 13" fill="none">
                    <path d="M6 13V1.500M1 6.500l5-5 5 5" stroke="#555" strokeWidth="1.800" />
                </svg>
            </button>
        </div>
        <div className="flex h-[22px] min-w-0 flex-1 items-center border border-[#d9d9d9]">
            <span className="pr-1 pl-[3px]">
                <FolderIcon />
            </span>
            <Chevron dir="right" size={8} width={1.8} />
            <a href="#" className="flex-1 pl-2">
                {FOLDER_NAME}
            </a>
            <button className="px-[2px]" aria-label="Previous locations">
                <Chevron dir="down" color="#666" width={2} />
            </button>
            <button
                className="flex h-full w-[18px] items-center justify-center border-l border-[#d9d9d9]"
                aria-label="Refresh"
            >
                <RotateCw size={11} color="#555" strokeWidth={3.2} />
            </button>
        </div>
        <div className="ml-3 flex h-[22px] w-[202px] items-center border border-[#d9d9d9] pr-[7px] pl-2">
            <input
                type="text"
                aria-label="Search folder"
                className="min-w-0 flex-1 outline-none placeholder:text-[#6d6d6d]"
                placeholder="Search 251129-t548pa1kdr_pw..."
            />
            <svg width="12" height="12" viewBox="0 0 12 12" fill="none">
                <circle cx="7.500" cy="4.500" r="3.500" stroke="#666" strokeWidth="1.500" />
                <path d="M5 7.200L.800 11.300" stroke="#666" strokeWidth="1.800" />
            </svg>
        </div>
    </div>
);

const ExplorerWindow = () => (
    <div className="absolute top-[74px] right-[108px] bottom-[61px] left-[128px] flex flex-col bg-white">
        <TitleBar />
        <Tabs />
        <Ribbon />
        <AddressBar />
        <div className="flex min-h-0 flex-1 pt-px">
            <NavPane />
            <FileList />
        </div>
        <footer className="flex h-6 shrink-0 items-center pl-[14px] text-[#1e395b]">
            <span className="w-[54px]">1 item</span>
            <span className="pr-2">1 item selected</span>
            <span>91.6 MB</span>
        </footer>
    </div>
);

/* ---------- context menu ---------- */

const NotepadIcon = () => (
    <Svg16>
        <rect x="0.500" y="1.500" width="12" height="14" fill="#f6f6f4" stroke="#60656a" />
        <path d="M2 1.500h10" stroke="#3b3f43" strokeDasharray="1 1" />
        <path d="M2 7.500q5-2 9-1V14H2z" fill="#7dc11f" />
        <path d="M2 11h9v3H2z" fill="#4e9510" />
        <path d="M14.500 0l1 1-4.500 8-2 1 .500-2z" fill="#e39a2c" stroke="#5a4320" strokeWidth="0.600" />
    </Svg16>
);

const ShareIcon = () => (
    <Svg16>
        <path d="M3 5.500H.500v8h11v-3" stroke="#333" strokeWidth="1.200" />
        <path
            d="M9 1.500l5.500 4L9 9.500V7.300c-2.500 0-4 .700-5.500 2.700.200-3 2-6 5.500-6.300z"
            stroke="#333"
            strokeWidth="1.100"
        />
    </Svg16>
);

const RarSmallIcon = () => (
    <Svg16>
        <path d="M0 0h16v5H0z" fill="#dc2a50" />
        <path d="M0 5h16v5.500H0z" fill="#3a4caa" />
        <path d="M0 10.500h16V16H0z" fill="#178a3b" />
        <path d="M1.500 1v14" stroke="#8ad07e" strokeDasharray="3 2" />
        <path d="M0 5.500h16M0 10.500h16" stroke="#33203a" strokeWidth="0.800" />
        <rect x="5" y="0" width="6" height="16" fill="#c2672c" />
        <rect x="4.500" y="5.500" width="7" height="5.500" fill="#8b2c24" />
        <path d="M5.500 6v4.500h5V6M8 5.500v3" stroke="#fff" strokeWidth="1.200" />
    </Svg16>
);

type MenuEntry = { label: string; icon?: ReactNode; bold?: boolean; submenu?: boolean };

const menuGroups: MenuEntry[][] = [
    [
        { label: 'Open with', bold: true },
        { label: 'Edit with Notepad++', icon: <NotepadIcon /> },
        { label: 'Share', icon: <ShareIcon /> },
    ],
    [
        { label: 'Give access to', submenu: true },
        { label: 'Add to archive...', icon: <RarSmallIcon /> },
        {
            label: 'Add to "_2daa85b39f3abd83588a142eff2d00476382336ab0f6d69bc68ad52b7302668e.rar"',
            icon: <RarSmallIcon />,
        },
        { label: 'Compress and email...', icon: <RarSmallIcon /> },
        {
            label: 'Compress to "_2daa85b39f3ab...0476382336ab0f6d69bc68ad52b7302668e.rar" and email',
            icon: <RarSmallIcon />,
        },
        { label: 'Restore previous versions' },
    ],
    [{ label: 'Send to', submenu: true }],
    [{ label: 'Cut' }, { label: 'Copy' }],
    [{ label: 'Create shortcut' }, { label: 'Delete' }, { label: 'Rename' }],
    [{ label: 'Properties' }],
];

const ContextMenu = () => (
    <div
        role="menu"
        className="absolute top-[287px] left-[690px] w-[571px] border border-[#a0a0a0] bg-[#eeeeee] px-[10px] py-1"
    >
        {menuGroups.map((group, index) => (
            <div key={index}>
                {index > 0 && <hr className="my-[3px] border-[#919191]" />}
                {group.map((entry) => (
                    <button
                        key={entry.label}
                        role="menuitem"
                        className="flex h-[22px] w-full items-center gap-2 text-left whitespace-nowrap"
                    >
                        <span className="w-4 shrink-0">{entry.icon}</span>
                        <span className={clsx('flex-1', entry.bold && 'font-bold')}>
                            {entry.label}
                        </span>
                        {entry.submenu && (
                            <svg width="8" height="12" viewBox="0 0 8 12" fill="none">
                                <path d="M1 0l6 6-6 6" stroke="#333" />
                            </svg>
                        )}
                    </button>
                ))}
            </div>
        ))}
    </div>
);

/* ---------- watermark ---------- */

const Watermark = () => (
    <div className="pointer-events-none absolute right-[49px] bottom-[8px] flex items-center gap-[6px] font-['Open_Sans_Condensed','Roboto_Condensed','Liberation_Sans_Narrow',sans-serif] text-[40px] leading-[62px] font-light text-white opacity-50">
        <span>ANY</span>
        <svg width="56" height="62" viewBox="0 0 56 62" fill="none">
            <g stroke="#fff" strokeWidth="4" strokeLinejoin="round" strokeLinecap="round">
                <path d="M7 7L2 11v43l44-21" />
                <path d="M12 44V3l42 25" />
                <path d="M17 15l36 20-39 24-4-2" />
            </g>
        </svg>
        <span>RUN</span>
    </div>
);

/* ---------- taskbar ---------- */

const TaskButton = ({
    label,
    active,
    children,
}: {
    label: string;
    active?: boolean;
    children: ReactNode;
}) => (
    <button
        aria-label={label}
        className={clsx(
            'flex w-12 items-center justify-center',
            active && 'border-b-2 border-[#76b9ed] bg-[#33484f]'
        )}
    >
        {children}
    </button>
);

const DiwaliArt = () => (
    <svg width="66" height="34" viewBox="0 0 66 34">
        <path d="M3 16h28c0 8-5 13-14 13S3 24 3 16z" fill="#9a4fd8" />
        <ellipse cx="17" cy="17" rx="14" ry="4" fill="#c98bf2" />
        <ellipse cx="17" cy="17.500" rx="10" ry="2.500" fill="#f5b268" />
        <path d="M17 5q5 6 2 11h-4q-3-4 2-11z" fill="#f39a2d" />
        <path d="M6 21l3 3 4-1 4 2 4-2 4 1 3-3" fill="none" stroke="#6d2bb4" strokeWidth="1.500" />
        <g transform="translate(49 16)">
            {[0, 45, 90, 135, 180, 225, 270, 315].map((angle, index) => (
                <g key={angle} transform={`rotate(${angle})`}>
                    <path
                        d="M0-16l4 7-4 4-4-4z"
                        fill={index % 2 ? '#f5a13c' : '#f07f72'}
                    />
                    <path
                        d="M0-11l3 5-3 4-3-4z"
                        fill={index % 2 ? '#35a9b4' : '#5f9fc8'}
                    />
                </g>
            ))}
            <circle r="4.500" fill="#e8479f" />
            <circle r="2" fill="#f7b6d8" />
        </g>
    </svg>
);

const Taskbar = () => (
    <footer className="flex h-10 shrink-0 bg-linear-to-r from-[#001923] via-[#001019] to-[#02081c] text-white">
        <TaskButton label="Start">
            <svg width="16" height="16" viewBox="0 0 16 16" fill="#fff">
                <path d="M0 2.300L6.500 1.400v6.100H0zM7.300 1.300L16 0v7.500H7.300zM0 8.300h6.500v6.200L0 13.600zM7.300 8.300H16V16l-8.700-1.300z" />
            </svg>
        </TaskButton>
        <div className="flex w-72 items-center bg-[#f2f2f2] pl-3">
            <svg width="18" height="18" viewBox="0 0 18 18" fill="none">
                <circle cx="10.500" cy="6.500" r="5.500" stroke="#222" strokeWidth="1.200" />
                <path d="M6.500 10.500L.500 17" stroke="#222" strokeWidth="1.200" />
            </svg>
            <input
                type="text"
                aria-label="Search"
                placeholder="Type here to search"
                className="min-w-0 flex-1 pl-[10px] text-[14px] outline-none placeholder:text-[#333]"
            />
            <div className="mr-2">
                <DiwaliArt />
            </div>
        </div>
        <div className="flex gap-0.5">
            <TaskButton label="Task View">
                <svg width="18" height="16" viewBox="0 0 18 16" fill="none" stroke="#fff">
                    <path d="M1.500 0v2.500h9V0M1.500 16v-2.500h9V16M1.500 4.500h9v7h-9z" />
                    <path d="M15.500 0v2M15.500 9v7" />
                    <path d="M15.500 4v3" strokeWidth="3" />
                </svg>
            </TaskButton>
            <TaskButton label="Microsoft Edge">
                <EdgeIcon size={24} />
            </TaskButton>
            <TaskButton label="File Explorer" active>
                <LibrariesIcon size={22} />
            </TaskButton>
            <TaskButton label="Firefox">
                <FirefoxIcon size={24} />
            </TaskButton>
        </div>
        <div className="ml-auto flex items-center gap-2">
            <button aria-label="Show hidden icons">
                <svg width="12" height="8" viewBox="0 0 12 8" fill="none">
                    <path d="M.500 7L6 1.500 11.500 7" stroke="#fff" strokeWidth="1.200" />
                </svg>
            </button>
            <button className="pl-0.5" aria-label="Meet now">
                <svg width="16" height="16" viewBox="0 0 16 16" fill="none" stroke="#fff">
                    <path d="M4 2.500q4-3 8 0M4 13.500q4 3 8 0" />
                    <rect x="3.500" y="5.500" width="7" height="6" rx="1" />
                    <path d="M10.500 8l3-2v5l-3-2" />
                </svg>
            </button>
            <button aria-label="Volume">
                <svg width="17" height="16" viewBox="0 0 17 16" fill="none" stroke="#fff">
                    <path d="M.500 5.500H3l4-3.500v12l-4-3.500H.500z" />
                    <path d="M9 6q1.500 2 0 4M11.500 4.500q3 3.500 0 7M14 3q4 5 0 10" />
                </svg>
            </button>
            <button aria-label="Network">
                <svg width="16" height="16" viewBox="0 0 16 16" fill="none" stroke="#fff">
                    <path d="M5.500 3.500h10v8h-11V7M10.500 11.500v3M7 14.500h7" />
                    <path d="M.500 1.500h4v3h-4zM2.500 4.500v8" />
                </svg>
            </button>
            <div className="w-[58px] text-center leading-[18px] whitespace-nowrap">
                <p>5:09 PM</p>
                <p>11/29/2025</p>
            </div>
            <button className="pr-[19px] pl-[7px]" aria-label="Notifications">
                <svg width="17" height="16" viewBox="0 0 17 16" fill="none" stroke="#fff">
                    <path d="M.500 1.500h16v11h-5L8.500 15.500l-3-3h-5z" />
                </svg>
            </button>
        </div>
        <button
            className="w-[5px] border-l border-[#5b6070]"
            aria-label="Show desktop"
        />
    </footer>
);

export default function App() {
    return (
        <div className="flex h-screen flex-col overflow-hidden bg-linear-[80deg,#00b0ff_0%,#00a8fa_18%,#0094ec_36%,#0074dc_56%,#0055cc_74%,#0347be_88%,#033db2_100%] font-['Open_Sans','Noto_Sans',sans-serif] text-[11px] text-black">
            <div className="relative min-h-0 flex-1">
                <ul className="grid w-max auto-cols-[75px] grid-flow-col grid-rows-[repeat(7,99px)]">
                    {desktopItems.map((item) => (
                        <li key={item.label}>
                            <a
                                href="#"
                                className="flex w-[74px] flex-col items-center gap-[3px] px-px pt-[7px] text-center leading-[15px] text-white text-shadow-[0_1px_2px_#0008]"
                            >
                                <span className="relative h-12 w-12">
                                    {item.icon}
                                    {item.shortcut && <ShortcutArrow />}
                                </span>
                                {item.label}
                            </a>
                        </li>
                    ))}
                </ul>
                <ExplorerWindow />
                <ContextMenu />
                <Watermark />
            </div>
            <Taskbar />
        </div>
    );
}
